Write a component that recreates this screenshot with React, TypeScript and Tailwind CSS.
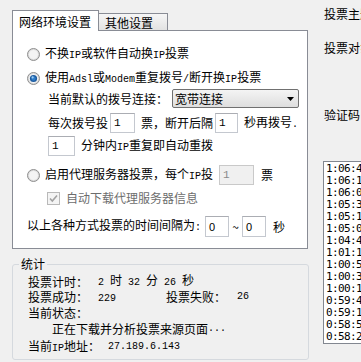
import React from "react";

const L = ({ children }: { children: React.ReactNode }) => (
  <span className="font-['Liberation_Mono',monospace] text-[10px]">{children}</span>
);

const Radio = ({ checked }: { checked?: boolean }) => (
  <svg width="13" height="13" viewBox="0 0 13 13" className="shrink-0">
    <circle cx="6.5" cy="6.5" r="6" fill="#dcdcdc" stroke="#8f8f8f" />
    <circle cx="6.5" cy="6.5" r="4.5" fill="#f4f4f4" />
    {checked && (
      <>
        <circle cx="6.5" cy="6.5" r="3.6" fill="#1c5a9e" />
        <circle cx="6.5" cy="6.5" r="2.2" fill="#2f7cc8" />
        <circle cx="5.6" cy="5.4" r="1.1" fill="#9fd0f5" />
      </>
    )}
  </svg>
);

const Box = ({ value, w, disabled, sans }: { value: string; w: string; disabled?: boolean; sans?: boolean }) => (
  <div
    className={`${w} h-full border flex items-center pl-[3px] text-[11px] ${
      disabled ? "bg-[#f0f0f0] border-[#c9c9c9] text-[#8a8a8a]" : "bg-white border-[#c4c8cf] border-t-[#abadb3] text-black"
    } ${sans ? "font-['Liberation_Sans',sans-serif]" : "font-['Liberation_Mono',monospace]"}`}
  >
    {value}
  </div>
);

const logLines = [
  "1:06:45 投票成功",
  "1:06:19 投票成功",
  "1:06:02 投票成功",
  "1:05:37 投票成功",
  "1:05:14 投票成功",
  "1:05:01 投票成功",
  "1:04:48 投票成功",
  "1:01:16 投票成功",
  "1:00:53 投票成功",
  "1:00:35 投票成功",
  "1:00:12 投票成功",
  "0:59:47 投票成功",
  "0:59:18 投票成功",
  "0:58:52 投票成功",
  "0:58:26 投票成功",
];

export default function App() {
  return (
    <div className="w-[361px] h-[362px] overflow-hidden bg-[#f0f0f0] flex text-[12px] text-black font-['Noto_Sans_CJK_SC',sans-serif] leading-[16px]">
      {/* left side */}
      <div className="w-[318px] shrink-0 pl-[12px] pt-[10px]">
        {/* tabs */}
        <div className="relative z-10 -mb-px flex items-end h-[21px]">
          <div className="w-[87px] h-[21px] bg-white border border-b-0 border-[#898c95] pl-[6px] pt-[3px] whitespace-nowrap">
            网络环境设置
          </div>
          <div className="w-[69px] h-[18px] border border-l-0 border-[#898c95] bg-gradient-to-b from-[#f6f6f6] to-[#e2e2e2] pl-[6px] pt-[1px] whitespace-nowrap">
            其他设置
          </div>
        </div>

        {/* panel */}
        <div className="w-[296px] h-[219px] border border-[#898c95] bg-white flex flex-col pl-[14px] whitespace-nowrap">
          <div className="mt-[15px] h-[16px] flex items-center">
            <Radio />
            <span className="ml-[5px]">
              不换<L>IP</L>或软件自动换<L>IP</L>投票
            </span>
          </div>
          <div className="mt-[8px] h-[16px] flex items-center">
            <Radio checked />
            <span className="ml-[5px]">
              使用<L>Adsl</L>或<L>Modem</L>重复拨号<L>/</L>断开换<L>IP</L>投票
            </span>
          </div>
          <div className="mt-[3px] h-[19px] flex items-center pl-[21px]">
            <span>当前默认的拨号连接：</span>
            <div className="ml-[4px] w-[127px] h-full rounded-[2px] border border-[#707070] bg-gradient-to-b from-[#f4f4f4] to-[#dedede] flex items-center justify-between pl-[2px] pr-[4px]">
              <span>宽带连接</span>
              <svg width="7" height="4" viewBox="0 0 7 4">
                <path d="M0 0H7L3.5 4Z" fill="#000" />
              </svg>
            </div>
          </div>
          <div className="mt-[5px] h-[20px] flex items-center pl-[21px]">
            <span>每次拨号投</span>
            <div className="ml-[2px] h-full">
              <Box value="1" w="w-[25px]" />
            </div>
            <span className="ml-[6px]">票，断开后隔</span>
            <div className="ml-[2px] h-full">
              <Box value="1" w="w-[23px]" />
            </div>
            <span className="ml-[6px]">
              秒再拨号<L>.</L>
            </span>
          </div>
          <div className="mt-[3px] h-[20px] flex items-center pl-[21px]">
            <Box value="1" w="w-[27px]" />
            <span className="ml-[6px]">
              分钟内<L>IP</L>重复即自动重拨
            </span>
          </div>
          <div className="mt-[9px] h-[20px] flex items-center">
            <Radio />
            <span className="ml-[5px]">
              启用代理服务器投票，每个<L>IP</L>投
            </span>
            <div className="ml-[6px] h-full">
              <Box value="1" w="w-[35px]" disabled />
            </div>
            <span className="ml-[7px]">票</span>
          </div>
          <div className="mt-[5px] h-[16px] flex items-center pl-[20px]">
            <svg width="13" height="13" viewBox="0 0 13 13" className="shrink-0">
              <rect x="0.5" y="0.5" width="12" height="12" fill="#f4f4f4" stroke="#b9b9b9" />
              <path d="M3 6.5L5.3 9L10 3.5" fill="none" stroke="#a2a2a2" strokeWidth="1.6" />
            </svg>
            <span className="ml-[6px] text-[#6d6d6d]">自动下载代理服务器信息</span>
          </div>
          <div className="mt-[10px] h-[21px] flex items-center">
            <span>
              以上各种方式投票的时间间隔为<L>:</L>
            </span>
            <div className="ml-[4px] h-full">
              <Box value="0" w="w-[24px]" sans />
            </div>
            <span className="w-[13px] text-center">~</span>
            <div className="h-full">
              <Box value="0" w="w-[24px]" sans />
            </div>
            <span className="ml-[7px]">秒</span>
          </div>
        </div>

        {/* stats group */}
        <div className="relative mt-[15px] w-[297px] h-[96px] border border-[#d5d9de] rounded-[3px] pl-[15px] pt-[9px] whitespace-nowrap">
          <span className="absolute left-[6px] -top-[9px] px-[2px] bg-[#f0f0f0]">统计</span>
          <div className="h-[15px] flex items-center">
            <span className="w-[70px]">投票计时：</span>
            <span>
              <L>2 </L>时<L> 32 </L>分<L> 26 </L>秒
            </span>
          </div>
          <div className="h-[16px] flex items-center">
            <span className="w-[70px]">投票成功：</span>
            <span className="w-[68px]">
              <L>229</L>
            </span>
            <span className="w-[71px]">投票失败：</span>
            <L>26</L>
          </div>
          <div className="h-[16px] flex items-center">当前状态：</div>
          <div className="h-[16px] flex items-center pl-[24px]">
            正在下载并分析投票来源页面<L>...</L>
          </div>
          <div className="mt-[2px] h-[16px] flex items-center">
            <span className="w-[80px]">
              当前<L>IP</L>地址：
            </span>
            <L>27.189.6.143</L>
          </div>
        </div>
      </div>

      {/* right side */}
      <div className="flex-1 min-w-0 pl-[6px] flex flex-col whitespace-nowrap">
        <div className="mt-[6px]">投票主题：</div>
        <div className="mt-[18px]">投票对象：</div>
        <div className="mt-[51px]">验证码：</div>
        <div className="mt-[38px] -ml-px w-[90px] h-[183px] border border-[#828790] bg-white pl-[2px] pt-[1px]">
          {logLines.map((line, i) => (
            <div key={i} className="h-[12px] leading-[12px] text-[11px] tracking-[-0.6px] font-['DejaVu_Sans_Mono',monospace]">
              {line}
            </div>
          ))}
        </div>
      </div>
    </div>
  );
}
